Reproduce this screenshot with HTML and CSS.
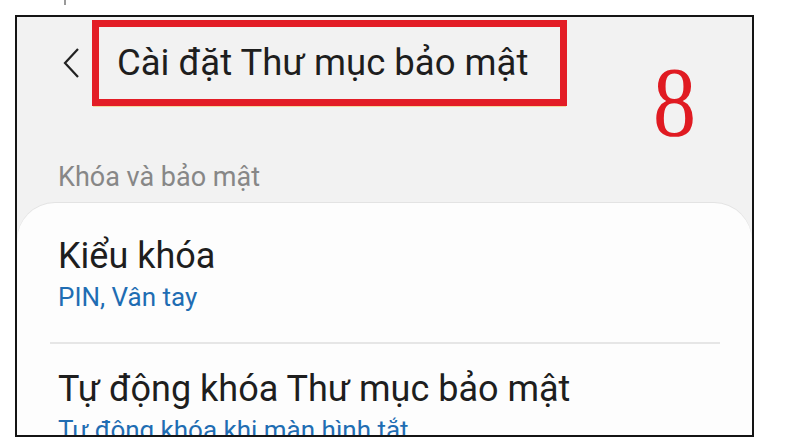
FILE: index.html
```html
<!DOCTYPE html>
<html lang="vi">
<head>
<meta charset="utf-8">
<link rel="stylesheet" href="styles.css">
</head>
<body>
<span class="topmark"></span>
<div class="phone">
  <div class="appbar">
    <svg class="back" width="20" height="32" viewBox="0 0 20 32"><polyline points="16,2 3,16 16,30" fill="none" stroke="#222" stroke-width="2.2" stroke-linejoin="miter"/></svg>
    <div class="titlebox"><span class="title">Cài đặt Thư mục bảo mật</span></div>
    <span class="step">8</span>
  </div>
  <div class="section">Khóa và bảo mật</div>
  <div class="card">
    <div class="item">
      <div class="item-title">Kiểu khóa</div>
      <div class="item-sub">PIN, Vân tay</div>
    </div>
    <div class="divider"></div>
    <div class="item">
      <div class="item-title">Tự động khóa Thư mục bảo mật</div>
      <div class="item-sub">Tự động khóa khi màn hình tắt</div>
    </div>
  </div>
</div>
</body>
</html>
```
FILE: styles.css
```css
html, body {
  margin: 0;
  padding: 0;
  background: #ffffff;
}
body {
  position: relative;
  width: 802px;
  height: 446px;
  overflow: hidden;
  font-family: Roboto, "Noto Sans", sans-serif;
}
.topmark {
  position: absolute;
  left: 64px;
  top: 0;
  width: 2px;
  height: 5px;
  background: #9a9a9a;
}
.phone {
  position: relative;
  margin: 15px 0 0 15px;
  width: 735px;
  height: 418px;
  border: 2px solid #141414;
  background: #f2f2f2;
  overflow: hidden;
}
.appbar {
  display: flex;
  align-items: center;
  height: 86px;
  margin-top: 3px;
}
.back {
  margin-left: 45px;
  margin-right: 10px;
  flex: none;
}
.titlebox {
  box-sizing: border-box;
  width: 475px;
  height: 86px;
  border: 7px solid #e31d26;
  display: flex;
  align-items: center;
  padding-left: 18px;
  box-shadow: 0 2px 0 -1px #f3d9a0;
}
.title {
  font-size: 36.5px;
  color: #1e1e1e;
  line-height: 40px;
  white-space: nowrap;
}
.step {
  position: absolute;
  left: 636px;
  top: 35px;
  font-family: "Liberation Serif", serif;
  font-size: 100px;
  line-height: 100px;
  color: #e01b22;
  transform: scaleX(0.86);
  transform-origin: left center;
}
.section {
  margin: 55px 0 0 41px;
  font-size: 27px;
  line-height: 32px;
  color: #878787;
}
.card {
  margin-top: 10px;
  background: #fdfdfd;
  border-radius: 38px 38px 0 0;
  box-shadow: 0 -1px 0 #e3e3e3;
  padding-top: 32px;
  height: 400px;
}
.item {
  padding-left: 41px;
  padding-bottom: 30px;
}
.item + .divider + .item {
  padding-top: 24px;
}
.item-title {
  font-size: 36px;
  line-height: 42px;
  color: #1e1e1e;
  white-space: nowrap;
}
.item-sub {
  margin-top: 5px;
  font-size: 26px;
  line-height: 30px;
  color: #1f6db3;
  white-space: nowrap;
}
.divider {
  height: 2px;
  background: #e6e6e6;
  margin: 0 32px 0 33px;
}
```
